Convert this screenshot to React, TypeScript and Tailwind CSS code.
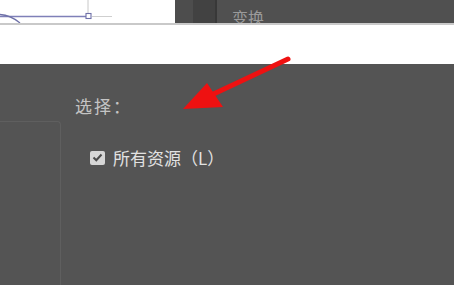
import React from "react";

const cjk = { fontFamily: '"Noto Sans CJK SC", "Liberation Serif", serif' };

function CurveCanvas() {
  return (
    <svg width="175" height="23" viewBox="0 0 175 23" className="block">
      <line x1="88" y1="0" x2="88" y2="13" stroke="#c8c8c8" strokeWidth="1" />
      <line x1="92" y1="16.5" x2="112" y2="16.5" stroke="#cfcfcf" strokeWidth="1" />
      <line x1="0" y1="16.5" x2="86" y2="16.5" stroke="#7f80b8" strokeWidth="1.3" />
      <path d="M0 14.5 C 8 15, 14 18, 20 23" fill="none" stroke="#6e70a8" strokeWidth="1.3" />
      <rect x="86" y="13.5" width="5" height="5" fill="white" stroke="#6e70a8" strokeWidth="1.1" />
    </svg>
  );
}

function RedArrow() {
  return (
    <svg width="454" height="285" viewBox="0 0 454 285" className="pointer-events-none absolute left-0 top-0">
      <line x1="288" y1="59" x2="205" y2="98" stroke="#ee1111" strokeWidth="5" strokeLinecap="round" />
      <polygon points="183,109 207,83 223,107" fill="#ee1111" />
    </svg>
  );
}

export default function App() {
  return (
    <div className="relative h-[285px] w-[454px] overflow-hidden bg-white">
      {/* top strip: curve editor + panel header */}
      <div className="flex h-[25px] border-b-2 border-[#c9c9c9]">
        <div className="w-[175px] bg-white">
          <CurveCanvas />
        </div>
        <div className="w-[18px] bg-[#4d4d4d]" />
        <div className="w-[22px] bg-[#424242]" />
        <div className="w-[2px] bg-[#383838]" />
        <div className="flex-1 overflow-hidden bg-[#505050] pl-[15px]">
          <div className="mt-[9px] text-[16px] leading-[17px] text-[#9a9a9a]" style={cjk}>
            变换
          </div>
        </div>
      </div>

      <div className="h-[39px] bg-white" />

      {/* dialog body */}
      <div className="flex h-[221px] bg-[#545454]">
        <div className="mt-[57px] w-[61px] rounded-tr-[4px] border-r border-t border-[#5f5f5f]" />
        <div className="flex flex-col pl-[14px] pt-[32px]">
          <div className="text-[17px] leading-[19px] tracking-[2px] text-[#c4c4c4]" style={cjk}>
            选择：
          </div>
          <div className="ml-[15px] mt-[33px] flex items-center gap-[8px]">
            <div className="flex h-[14px] w-[15px] items-center justify-center rounded-[2px] bg-[#d6d6d6]">
              <svg width="11" height="9" viewBox="0 0 11 9">
                <path d="M1.5 4.5 L4.3 7.2 L9.5 1.5" fill="none" stroke="#4a4a4a" strokeWidth="2" />
              </svg>
            </div>
            <div className="text-[17px] leading-[19px] text-[#e2e2e2]" style={cjk}>
              所有资源（L）
            </div>
          </div>
        </div>
      </div>

      <RedArrow />
    </div>
  );
}
